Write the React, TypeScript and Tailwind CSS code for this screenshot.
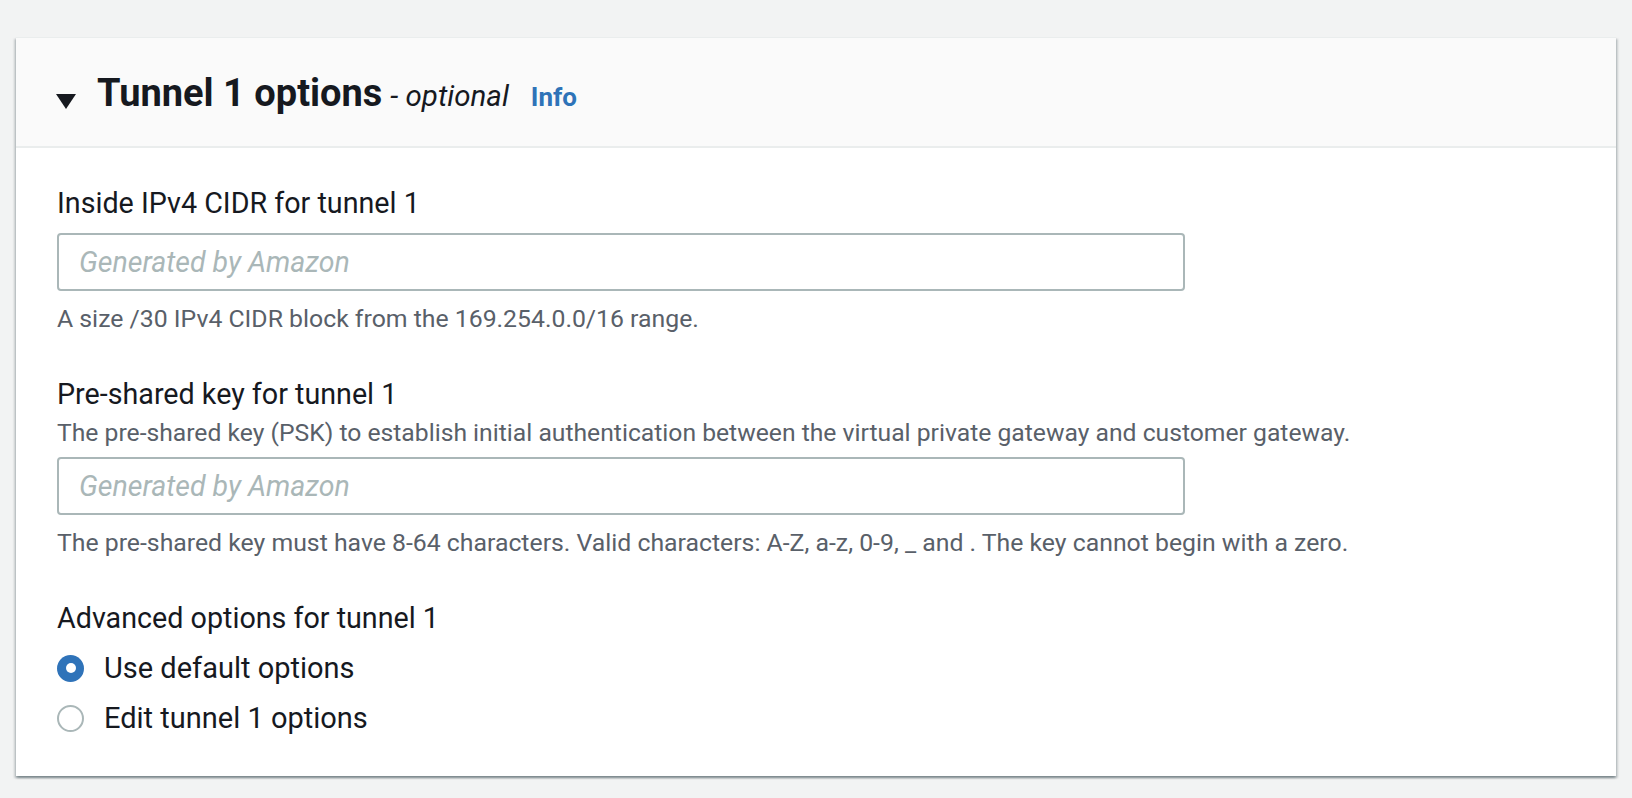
import React, { useState } from "react";

// Expandable section with tunnel options form
function Field({
  label,
  description,
  constraint,
}: {
  label: string;
  description?: string;
  constraint: string;
}) {
  return (
    <div className="flex flex-col">
      <label className="text-[28.7px] leading-[40px] text-[#16191f]">{label}</label>
      {description && (
        <p className="mt-[3px] text-[24.7px] leading-[32px] text-[#596069]">{description}</p>
      )}
      <input
        type="text"
        placeholder="Generated by Amazon"
        className={`${description ? "mt-2" : "mt-[10px]"} h-[58px] w-[1128px] rounded-[4px] border-2 border-[#aab7b8] bg-white px-5 text-[28.5px] text-[#16191f] outline-none placeholder:italic placeholder:text-[#aab7b8]`}
      />
      <p className="mt-3 text-[24.8px] leading-[32px] text-[#596069]">{constraint}</p>
    </div>
  );
}

function Radio({ checked, label, onClick }: { checked: boolean; label: string; onClick: () => void }) {
  return (
    <div className="flex h-[40px] cursor-pointer items-center gap-5" onClick={onClick}>
      {checked ? (
        <span className="flex h-[27px] w-[27px] items-center justify-center rounded-full bg-[#2f73b9]">
          <span className="h-[10px] w-[10px] rounded-full bg-white" />
        </span>
      ) : (
        <span className="h-[27px] w-[27px] rounded-full border-2 border-[#aab7b8] bg-white" />
      )}
      <span className="text-[29px] leading-[40px] text-[#16191f]">{label}</span>
    </div>
  );
}

export default function App() {
  const [advanced, setAdvanced] = useState("default");

  return (
    <div className="min-h-screen bg-[#f2f3f3] px-4 pt-[37px] font-[Roboto,sans-serif]">
      <div className="w-[1600px] border-t border-[#eaeded] bg-white shadow-[0_2px_2px_0_rgba(0,28,36,0.3),2px_2px_2px_0_rgba(0,28,36,0.15),-2px_2px_2px_0_rgba(0,28,36,0.15)]">
        {/* Header */}
        <div className="flex h-[110px] items-center border-b-2 border-[#eaeded] bg-[#fafafa] pl-10 pt-[4px]">
          <svg width="20" height="16" viewBox="0 0 20 16" className="mt-[16px] shrink-0">
            <polygon points="0,0 20,0 10,15" fill="#16191f" />
          </svg>
          <div className="ml-[21px] flex items-baseline">
            <h2 className="text-[38px] font-bold leading-[48px] text-[#16191f]">Tunnel 1 options</h2>
            <span className="ml-2 text-[29.5px] italic text-[#16191f]">- optional</span>
            <a className="ml-[22px] text-[26px] font-bold text-[#2e73b8]">Info</a>
          </div>
        </div>

        {/* Body */}
        <div className="flex flex-col pb-[38px] pl-[41px] pt-[35px]">
          <Field
            label="Inside IPv4 CIDR for tunnel 1"
            constraint="A size /30 IPv4 CIDR block from the 169.254.0.0/16 range."
          />
          <div className="mt-[39px]">
            <Field
              label="Pre-shared key for tunnel 1"
              description="The pre-shared key (PSK) to establish initial authentication between the virtual private gateway and customer gateway."
              constraint="The pre-shared key must have 8-64 characters. Valid characters: A-Z, a-z, 0-9, _ and . The key cannot begin with a zero."
            />
          </div>
          <div className="mt-[39px] text-[28.7px] leading-[40px] text-[#16191f]">Advanced options for tunnel 1</div>
          <div className="mt-[10px] flex flex-col gap-[10px]">
            <Radio checked={advanced === "default"} label="Use default options" onClick={() => setAdvanced("default")} />
            <Radio checked={advanced === "edit"} label="Edit tunnel 1 options" onClick={() => setAdvanced("edit")} />
          </div>
        </div>
      </div>
    </div>
  );
}
